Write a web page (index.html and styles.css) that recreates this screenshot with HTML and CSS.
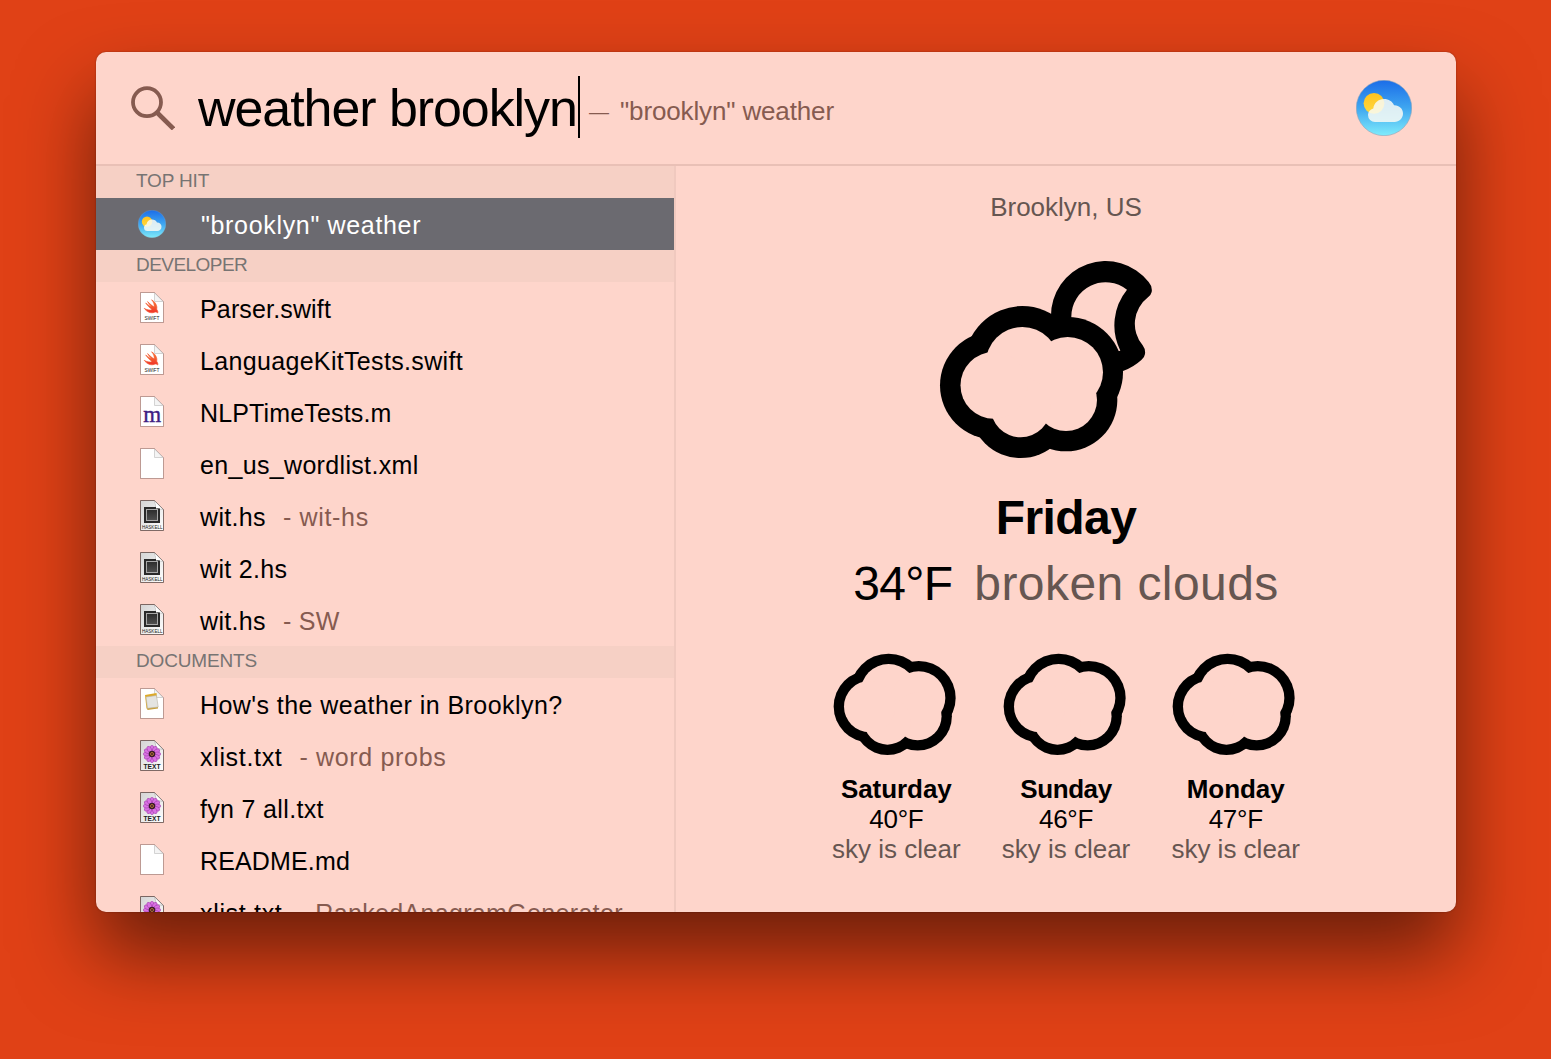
FILE: index.html
```html
<!DOCTYPE html>
<html lang="en">
<head>
<meta charset="utf-8">
<title>weather brooklyn</title>
<link rel="stylesheet" href="styles.css">
</head>
<body>
<svg class="defs" aria-hidden="true">
  <defs>
    <linearGradient id="sky" x1="0" y1="0" x2="0" y2="1"><stop offset="0" stop-color="#1b6de8"/><stop offset=".5" stop-color="#3fa6f0"/><stop offset="1" stop-color="#7fecfb"/></linearGradient>
    <linearGradient id="sun" x1="0" y1="0" x2="0" y2="1"><stop offset="0" stop-color="#ffc21f"/><stop offset="1" stop-color="#ffd940"/></linearGradient>
    <linearGradient id="flame" x1="0" y1="0" x2="0" y2="1"><stop offset="0" stop-color="#f88a36"/><stop offset="1" stop-color="#f0302a"/></linearGradient>
    <linearGradient id="sheet" x1="0" y1="0" x2="1" y2="1"><stop offset="0" stop-color="#d4d4d4"/><stop offset="1" stop-color="#fff"/></linearGradient>
    <linearGradient id="chip" x1="0" y1="0" x2="0" y2="1"><stop offset="0" stop-color="#2c2c2c"/><stop offset="1" stop-color="#505050"/></linearGradient>
  </defs>
  <symbol id="weather" viewBox="0 0 56 56">
    <circle cx="28" cy="28" r="27.7" fill="url(#sky)" stroke="#8ba3b8" stroke-width=".6"/>
    <circle cx="18" cy="23.3" r="10.4" fill="url(#sun)"/>
    <path d="M19 42A7 7 0 0 1 12 35C12 32 14 29.500 17.300 28.600C17.800 23 22.500 19 28 19C32.700 19 36.500 21.500 38 25.200C43.200 25 47 28.700 47 33.500C47 38.300 43.300 42 38.500 42Z" fill="#f8faf4" opacity=".86"/>
  </symbol>
  <symbol id="page" viewBox="0 0 26 33">
    <path d="M1.500 1.500H15.500L24.500 10.500V31.500H1.500Z" fill="#fff" stroke="#7b4a42" stroke-opacity=".5"/>
    <path d="M15.500 2V10.500H24Z" fill="#f4f4f4" stroke="#c9c9c9" stroke-width=".8"/>
  </symbol>
  <symbol id="graypage" viewBox="0 0 26 33">
    <path d="M1.500 1.500H15.500L24.500 10.500V31.500H1.500Z" fill="url(#sheet)" stroke="#55403c" stroke-opacity=".75"/>
    <path d="M15.500 2Q17.500 7 16.500 10Q20 9 24 10.500Z" fill="#fff" stroke="#aaa" stroke-width=".6"/>
  </symbol>
  <symbol id="swift" viewBox="0 0 26 33">
    <use href="#page"/>
    <path d="M12.600 8.800C16.800 11.500 18.500 15 17.700 18.200C19 19.900 19.100 21.400 18.600 22C17.500 20.700 16.300 20.900 15.200 21.400C11.500 22.700 7.500 20.700 5.200 17.300C8 19 11 19.500 13 18.500C10.500 16.700 8.300 14.300 6.700 12C9 13.800 11 15.300 12.500 16.100C11 14.300 9.500 12.300 8.600 10.600C11 13 13.500 15 15.200 16C15.500 13.500 14.500 11 12.600 8.800Z" fill="url(#flame)" stroke="#f4552e" stroke-width=".6"/>
  </symbol>
  <symbol id="haskell" viewBox="0 0 26 33">
    <use href="#graypage"/>
    <path d="M5 8H21V24H5Z" fill="#292929"/>
    <rect x="7.500" y="10.500" width="11" height="11" fill="url(#chip)" stroke="#a9a9a9"/>
    <path d="M16 3Q17.500 6 17 9.500Q20.500 8.800 23.500 10.500Z" fill="#fff"/>
  </symbol>
  <symbol id="note" viewBox="0 0 26 33">
    <use href="#page"/>
    <path d="M6 8L17.500 6L18 10.500L9 22.500L7.500 21.500Z" fill="#dda928"/>
    <path d="M8 20L19 19.500V21.500L8.500 23Z" fill="#c9a03b"/>
    <path d="M7 10L17.500 8.500L19.200 20L8.500 21.300Z" fill="#e4e4e1" stroke="#b9b4a4" stroke-width=".6"/>
  </symbol>
  <symbol id="flower" viewBox="0 0 26 33">
    <use href="#graypage"/>
    <g fill="#d870e2" stroke="#9a35a5" stroke-width=".5">
      <g id="petals"><ellipse cx="13" cy="9.700" rx="2" ry="3.400"/><ellipse cx="13" cy="20.300" rx="2" ry="3.400"/></g>
      <use href="#petals" transform="rotate(30 13 15)"/><use href="#petals" transform="rotate(60 13 15)"/><use href="#petals" transform="rotate(90 13 15)"/><use href="#petals" transform="rotate(120 13 15)"/><use href="#petals" transform="rotate(150 13 15)"/>
    </g>
    <circle cx="13" cy="15" r="3.300" fill="#3b1a2c"/><circle cx="13" cy="15" r="1.500" fill="none" stroke="#c98a35" stroke-width=".8"/>
  </symbol>
  <symbol id="cloud" viewBox="57 195 555 462">
    <g class="ink"><circle cx="307" cy="371" r="173"/><circle cx="443" cy="397" r="166"/><circle cx="438" cy="480" r="154"/><circle cx="302" cy="502" r="152"/><circle cx="222" cy="436" r="162"/></g>
    <g class="hollow"><circle cx="307" cy="371" r="126"/><circle cx="443" cy="397" r="119.500"/><circle cx="438" cy="480" r="107.500"/><circle cx="302" cy="502" r="105.500"/><circle cx="222" cy="436" r="115.500"/></g>
  </symbol>
</svg>

<main class="window">
  <header class="search">
    <svg class="glass" viewBox="0 0 44 44"><circle cx="16" cy="16.200" r="14" fill="none" stroke="#865b50" stroke-width="3.800"/><path d="M26 26.500L42.500 42.800" stroke="#865b50" stroke-width="4.600"/></svg>
    <div class="query">weather brooklyn</div>
    <div class="dash">—</div>
    <div class="hint">"brooklyn" weather</div>
    <svg class="app"><use href="#weather"/></svg>
  </header>
  <div class="body">
    <section class="list">
      <h2>TOP HIT</h2>
      <div class="row selected"><svg class="round"><use href="#weather"/></svg><span class="wide">"brooklyn" weather</span></div>
      <h2 class="narrow">DEVELOPER</h2>
      <div class="row"><svg><use href="#swift"/><text x="5.500" y="28.700" class="tag" textLength="15" lengthAdjust="spacingAndGlyphs">SWIFT</text></svg><span class="tight">Parser.swift</span></div>
      <div class="row"><svg><use href="#swift"/><text x="5.500" y="28.700" class="tag" textLength="15" lengthAdjust="spacingAndGlyphs">SWIFT</text></svg><span>LanguageKitTests.swift</span></div>
      <div class="row"><svg><use href="#page"/><text x="4.200" y="27" class="letter-m">m</text></svg><span class="tight">NLPTimeTests.m</span></div>
      <div class="row"><svg><use href="#page"/></svg><span>en_us_wordlist.xml</span></div>
      <div class="row"><svg><use href="#haskell"/><text x="3" y="29.500" class="tag" textLength="20.500" lengthAdjust="spacingAndGlyphs">HASKELL</text></svg><span>wit.hs</span><em class="wide">- wit-hs</em></div>
      <div class="row"><svg><use href="#haskell"/><text x="3" y="29.500" class="tag" textLength="20.500" lengthAdjust="spacingAndGlyphs">HASKELL</text></svg><span>wit 2.hs</span></div>
      <div class="row"><svg><use href="#haskell"/><text x="3" y="29.500" class="tag" textLength="20.500" lengthAdjust="spacingAndGlyphs">HASKELL</text></svg><span>wit.hs</span><em>- SW</em></div>
      <h2>DOCUMENTS</h2>
      <div class="row"><svg><use href="#note"/></svg><span class="long">How's the weather in Brooklyn?</span></div>
      <div class="row"><svg><use href="#flower"/><text x="4.500" y="29.800" class="tag tag-text" textLength="17" lengthAdjust="spacingAndGlyphs">TEXT</text></svg><span class="wide">xlist.txt</span><em class="wide">- word probs</em></div>
      <div class="row"><svg><use href="#flower"/><text x="4.500" y="29.800" class="tag tag-text" textLength="17" lengthAdjust="spacingAndGlyphs">TEXT</text></svg><span>fyn 7 all.txt</span></div>
      <div class="row"><svg><use href="#page"/></svg><span class="tight">README.md</span></div>
      <div class="row"><svg><use href="#flower"/></svg><span class="wide">xlist.txt</span><em>- RankedAnagramGenerator</em></div>
    </section>
    <section class="detail">
      <div class="place">Brooklyn, US</div>
      <svg class="night" viewBox="57 63 642 594">
        <path class="ink" fill-rule="evenodd" d="M393 230A164 164 0 0 1 686 126Q698 140 695 156Q693 165 684 172A100 100 0 0 0 668 316Q677 328 675 342Q674 352 664 360Q640 382 609 393L500 400L393 300ZM454 230A103 103 0 0 1 621 149A170 170 0 0 0 601 332L595 334L500 300L454 250Z"/>
        <g class="ink"><circle cx="307" cy="371" r="173"/><circle cx="443" cy="397" r="166"/><circle cx="438" cy="480" r="154"/><circle cx="302" cy="502" r="152"/><circle cx="222" cy="436" r="162"/></g>
        <g class="hollow"><circle cx="307" cy="371" r="110"/><circle cx="443" cy="397" r="106"/><circle cx="438" cy="480" r="93"/><circle cx="302" cy="502" r="90"/><circle cx="222" cy="436" r="100.500"/></g>
      </svg>
      <div class="today">Friday</div>
      <div class="now"><span class="temp">34°F</span><span class="sky">broken clouds</span></div>
      <div class="days">
        <div class="day"><svg><use href="#cloud"/></svg><b>Saturday</b><span class="deg">40°F</span><span class="sky">sky is clear</span></div>
        <div class="day"><svg><use href="#cloud"/></svg><b class="narrow">Sunday</b><span class="deg">46°F</span><span class="sky">sky is clear</span></div>
        <div class="day"><svg><use href="#cloud"/></svg><b>Monday</b><span class="deg">47°F</span><span class="sky">sky is clear</span></div>
      </div>
    </section>
  </div>
</main>
</body>
</html>
```
FILE: styles.css
```css
* { box-sizing: border-box; }
body {
  margin: 0;
  height: 1059px;
  padding: 52px 95px 0 96px;
  overflow: hidden;
  background: #e04116;
  font-family: "Liberation Sans", Arial, sans-serif;
  color: #000;
  white-space: nowrap;
}
svg { display: block; flex: none; }
.defs { position: absolute; width: 0; height: 0; }
.window {
  width: 1360px;
  height: 860px;
  display: flex;
  flex-direction: column;
  overflow: hidden;
  border-radius: 10px;
  background: #fed5cb;
  box-shadow: 0 0 2px rgba(0, 0, 0, .35), 0 42px 78px rgba(0, 0, 0, .52);
}

/* search field */
.search {
  flex: none;
  height: 114px;
  display: flex;
  align-items: center;
  padding: 0 44px 0 35px;
  border-bottom: 2px solid #e9c0b6;
}
.glass { width: 44px; height: 44px; }
.query {
  width: 382px;
  height: 62px;
  margin: -2px 0 0 23px;
  border-right: 2px solid #000;
  font-size: 52px;
  line-height: 64px;
  letter-spacing: -1.07px;
}
.dash { margin-left: 9px; padding-top: 8px; font-size: 20px; color: #865b50; }
.hint { margin-left: 11px; padding-top: 6px; font-size: 26px; letter-spacing: -.14px; color: #865b50; }
.app { width: 56px; height: 56px; margin-left: auto; }

/* results */
.body { flex: 1; min-height: 0; display: flex; }
.list { flex: none; width: 580px; overflow: hidden; border-right: 2px solid #f0c9bf; }
h2 {
  margin: 0;
  height: 32px;
  padding-left: 40px;
  background: #f6d0c5;
  color: #777473;
  font-size: 19px;
  font-weight: 400;
  line-height: 30px;
  letter-spacing: -.15px;
}
h2.narrow { letter-spacing: -.55px; }
.row { height: 52px; display: flex; align-items: center; padding-left: 43px; font-size: 25px; letter-spacing: .33px; }
.row svg { width: 26px; height: 33px; margin: 0 35px 2px 0; }
.row svg.round { width: 28px; height: 28px; margin: 0 35px 0 -1px; }
.row span, .row em { line-height: 49px; padding-top: 3px; }
.row em { margin-left: 17px; font-style: normal; color: #865b50; }
.row .tight { letter-spacing: .15px; }
.row .wide { letter-spacing: .67px; }
.row .long { letter-spacing: .44px; }
.selected { background: #6b6a70; color: #fff; }
.tag { font: 5.500px "Liberation Sans", Arial, sans-serif; letter-spacing: 0; fill: #222; }
.tag-text { font-size: 6.500px; font-weight: 700; }
.letter-m { font: 23px "Liberation Serif", serif; letter-spacing: 0; fill: #3e2082; stroke: #3e2082; stroke-width: .4px; }

/* forecast */
.detail { flex: 1; display: flex; flex-direction: column; align-items: center; padding-top: 26px; }
.ink { fill: #000; }
.hollow { fill: #fed5cb; }
.place { font-size: 26px; line-height: 30px; color: #665651; }
.night { width: 214px; height: 198px; margin: 39px 40px 0 0; }
.today { margin-top: 31px; font-size: 48px; line-height: 56px; font-weight: 700; letter-spacing: -.57px; }
.now { display: flex; gap: 22px; margin-top: 10px; font-size: 48px; line-height: 56px; }
.temp { letter-spacing: -.7px; }
.now .sky { letter-spacing: .43px; }
.sky { color: #665651; }
.days { display: flex; margin-top: 40.700px; }
.day { width: 169.700px; display: flex; flex-direction: column; align-items: center; font-size: 26px; line-height: 30px; }
.day svg { width: 123.330px; height: 102.670px; margin: 0 3.400px 18.300px 0; }
.day b { letter-spacing: -.05px; }
.day b.narrow { letter-spacing: -.4px; }
.deg { letter-spacing: -.27px; }
```
